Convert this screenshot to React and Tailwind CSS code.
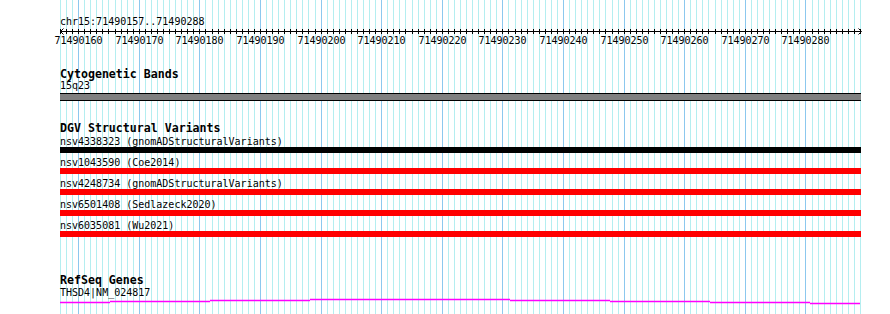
import React from "react";

const START = 71490157;
const BASES = 132;
const WIDTH = 800;
const BP = WIDTH / BASES;

const variants = [
  { label: "nsv4338323 (gnomADStructuralVariants)", color: "bg-black" },
  { label: "nsv1043590 (Coe2014)", color: "bg-[#ff0000]" },
  { label: "nsv4248734 (gnomADStructuralVariants)", color: "bg-[#ff0000]" },
  { label: "nsv6501408 (Sedlazeck2020)", color: "bg-[#ff0000]" },
  { label: "nsv6035081 (Wu2021)", color: "bg-[#ff0000]" },
];

// intron line of the gene, drawn in little steps
const geneSteps = [
  [0, 50, 4.5],
  [50, 150, 3.5],
  [150, 250, 2.5],
  [250, 450, 1.5],
  [450, 550, 2.5],
  [550, 650, 3.5],
  [650, 750, 4.5],
  [750, 800, 5.5],
];

const mono = "font-['DejaVu_Sans_Mono','Liberation_Mono',monospace]";

function GridLines() {
  const lines = [];
  for (let i = 0; i <= BASES; i++) {
    const x = Math.round(i * BP) + 0.5;
    const major = (START + i) % 10 === 0;
    lines.push(
      <line key={i} x1={x} x2={x} y1={0} y2={314} stroke={major ? "#8cc8ee" : "#b4eef0"} strokeWidth={1} />
    );
  }
  return (
    <svg className="absolute left-[60px] top-0" width={801} height={314}>
      {lines}
    </svg>
  );
}

function Ruler() {
  const ticks = [];
  const labels = [];
  for (let i = 0; i <= BASES; i++) {
    const x = Math.round(i * BP) + 0.5;
    ticks.push(<line key={i} x1={x} x2={x} y1={1} y2={6} stroke="#000" strokeWidth={1} />);
    if ((START + i) % 10 === 0) {
      labels.push(
        <text key={i} x={x} y={16} textAnchor="middle" fontSize="10" fontFamily="DejaVu Sans Mono, Liberation Mono, monospace" fill="#000">
          {START + i}
        </text>
      );
    }
  }
  return (
    <svg className="block ml-[-12px]" width={820} height={18}>
      <g transform="translate(12,0)">
        <line x1={0} x2={801} y1={3.5} y2={3.5} stroke="#000" strokeWidth={1} />
        <path d="M0.5 3.5 L3.5 0.5 M0.5 3.5 L3.5 6.5" stroke="#000" fill="none" />
        <path d="M801.5 3.5 L798.5 0.5 M801.5 3.5 L798.5 6.5" stroke="#000" fill="none" />
        {ticks}
        {labels}
      </g>
    </svg>
  );
}

function App() {
  return (
    <div className={`relative w-[890px] h-[314px] bg-white overflow-hidden text-black ${mono}`}>
      <GridLines />
      <div className="relative flex flex-col pl-[60px] w-[861px]">
        <div className="mt-[16px] text-[10px] leading-[12px]">chr15:71490157..71490288</div>
        <Ruler />

        <div className="mt-[22px] text-[11.6px] leading-[12px] font-bold">Cytogenetic Bands</div>
        <div className="text-[10px] leading-[12px]">15q23</div>
        <div className="mt-[1px] h-[8px] w-[801px] bg-[#808080] border-y border-black" />

        <div className="mt-[21px] text-[11.6px] leading-[12px] font-bold">DGV Structural Variants</div>
        <div className="mt-[2px] flex flex-col gap-[4px]">
          {variants.map((v) => (
            <div key={v.label} className="flex flex-col">
              <div className="text-[10px] leading-[11px] whitespace-pre">{v.label}</div>
              <div className={`h-[6px] w-[801px] ${v.color}`} />
            </div>
          ))}
        </div>

        <div className="mt-[37px] text-[11.6px] leading-[12px] font-bold">RefSeq Genes</div>
        <div className="mt-[1px] text-[10px] leading-[11px]">THSD4|NM_024817</div>
        <svg className="block" width={801} height={8}>
          {geneSteps.map(([a, b, y]) => (
            <line key={a} x1={a} x2={b} y1={y} y2={y} stroke="#ff00ff" strokeWidth={1.3} />
          ))}
        </svg>
      </div>
    </div>
  );
}

export default App;
